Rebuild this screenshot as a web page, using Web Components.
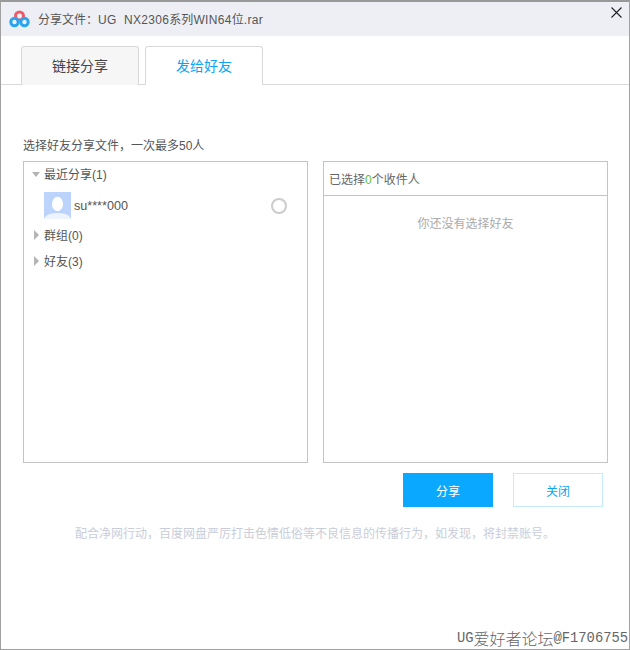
<!DOCTYPE html>
<html lang="zh"><head><meta charset="utf-8"><title>分享文件</title>
<style>
html,body{margin:0;padding:0;background:#fff}
body{font:12px "Liberation Sans","Noto Sans CJK SC",sans-serif;color:#333}
</style></head><body>
<share-dialog>
  <title-bar slot="title" pre="分享文件：" a="UG  NX2306" b="系列" c="WIN64" d="位" e=".rar"></title-bar>
  <share-tabs slot="tabs">
    <share-tab>链接分享</share-tab>
    <share-tab active>发给好友</share-tab>
  </share-tabs>
  <span slot="hint">选择好友分享文件，一次最多50人</span>
  <friend-panel slot="left">
    <tree-row open>最近分享(1)</tree-row>
    <friend-row>su****000</friend-row>
    <tree-row>群组(0)</tree-row>
    <tree-row>好友(3)</tree-row>
  </friend-panel>
  <selected-panel slot="right"></selected-panel>
  <action-button slot="actions" primary>分享</action-button>
  <action-button slot="actions">关闭</action-button>
  <span slot="notice">配合净网行动，百度网盘严厉打击色情低俗等不良信息的传播行为，如发现，将封禁账号。</span>
  <water-mark slot="mark"></water-mark>
</share-dialog>
<script>
function def(name, css, html){
  customElements.define(name, class extends HTMLElement{
    connectedCallback(){
      if(this.shadowRoot) return;
      const r=this.attachShadow({mode:'open'});
      r.innerHTML='<style>'+css+'</style>'+(typeof html==='function'?html(this):html);
    }
  });
}
def('share-dialog',`
:host{display:flex;flex-direction:column;position:relative;box-sizing:border-box;width:630px;height:650px;
 border:1px solid #a0a0a0;border-top:2px solid #999;background:#fff;overflow:hidden}
.hint{margin:53px 0 7px 22px;line-height:16px;font-size:12px;color:#555}
.panels{display:flex;gap:15px;margin-left:22px}
.actions{display:flex;justify-content:flex-end;gap:20px;margin:10px 26px 0 0}
.notice{margin-top:19px;text-align:center;line-height:16px;font-size:12px;color:#c9cdd8}
`,`<slot name="title"></slot><slot name="tabs"></slot>
<div class="hint"><slot name="hint"></slot></div>
<div class="panels"><slot name="left"></slot><slot name="right"></slot></div>
<div class="actions"><slot name="actions"></slot></div>
<div class="notice"><slot name="notice"></slot></div>
<slot name="mark"></slot>`);
def('title-bar',`
:host{display:flex;align-items:center;height:34px;background:#eeeff4;flex:none}
svg{display:block}
.logo{margin-left:8px;width:21px;height:18px;flex:none}
.t{margin-left:8px;font-size:12px;color:#555;flex:1;white-space:pre;position:relative;top:-1px}
.l{letter-spacing:.33px}
.x{margin-right:7px;width:11px;height:11px;align-self:flex-start;margin-top:5px;flex:none}
`,el=>{const g=n=>el.getAttribute(n);return `<svg class="logo" viewBox="0 0 21 18">
<circle cx="10.5" cy="6" r="4" fill="none" stroke="#ef5b6a" stroke-width="3"/>
<circle cx="5.5" cy="12" r="3.7" fill="none" stroke="#2ba4f0" stroke-width="3"/>
<circle cx="15.5" cy="12" r="3.7" fill="none" stroke="#2ba4f0" stroke-width="3"/>
</svg><span class="t">${g('pre')}<span class="l">${g('a')}</span>${g('b')}<span class="l">${g('c')}</span>${g('d')}<span class="l">${g('e')}</span></span>
<svg class="x" viewBox="0 0 11 11"><path d="M.5.5l10 10M10.5.5l-10 10" stroke="#222" stroke-width="1.1" fill="none"/></svg>`});
def('share-tabs',`
:host{display:flex;gap:6px;box-sizing:border-box;height:49px;padding:10px 0 0 20px;border-bottom:1px solid #d9d9d9;flex:none}
`,`<slot></slot>`);
def('share-tab',`
:host{display:flex;align-items:center;justify-content:center;box-sizing:border-box;width:118px;height:39px;
 border:1px solid #d9d9d9;border-bottom:0;border-radius:3px 3px 0 0;background:#f6f6f6;font-size:14px;color:#444;padding-bottom:3px}
:host([active]){background:#fff;color:#0aa5f5;position:relative;z-index:1}
:host([active])::after{content:"";position:absolute;left:0;right:0;bottom:-1px;height:1px;background:#fff}
`,`<slot></slot>`);
def('friend-panel',`
:host{display:block;box-sizing:border-box;width:285px;height:302px;border:1px solid #c4c4c4}
`,`<slot></slot>`);
def('tree-row',`
:host{display:flex;align-items:center;box-sizing:border-box;height:26px;font-size:12px;color:#555;position:relative;padding:0 0 2px 20px}
:host([open]){height:24px}
i{position:absolute;left:10px;top:8px;width:0;height:0;border-style:solid;border-width:5px 0 5px 5px;border-color:transparent transparent transparent #b4b4b4}
:host([open]) i{left:8px;top:10px;border-width:5px 4.5px 0 4.5px;border-color:#b4b4b4 transparent transparent transparent}
`,`<i></i><slot></slot>`);
def('friend-row',`
:host{display:flex;align-items:center;height:27px;padding:6px 20px 3px 20px;font-size:12px;color:#555}
svg{display:block;flex:none}
.n{margin-left:3px;flex:1;font-size:12.6px}
.r{box-sizing:border-box;width:16px;height:16px;border:2px solid #ccc;border-radius:50%;flex:none}
`,`<svg width="27" height="27" viewBox="0 0 27 27"><rect width="27" height="27" fill="#bcd3fb"/>
<ellipse cx="13.5" cy="12" rx="5.6" ry="7.2" fill="#fff"/>
<path d="M0 27c1-4 7-6 13.5-6S26 23 27 27z" fill="#eef4fe"/></svg>
<span class="n"><slot></slot></span><span class="r"></span>`);
def('selected-panel',`
:host{display:block;box-sizing:border-box;width:285px;height:302px;border:1px solid #c4c4c4}
.h{display:flex;align-items:center;box-sizing:border-box;height:34px;padding-left:5px;border-bottom:1px solid #c4c4c4;font-size:12px;color:#666}
b{font-weight:400;color:#5fc21e}
.e{margin-top:20px;line-height:16px;text-align:center;font-size:12px;color:#aaa}
`,`<div class="h"><span>已选择<b>0</b>个收件人</span></div><div class="e">你还没有选择好友</div>`);
def('action-button',`
:host{display:flex;align-items:center;justify-content:center;box-sizing:border-box;width:90px;height:34px;
 border:1px solid #c5e9fd;background:#fff;color:#0aa5f5;font-size:12px}
:host([primary]){background:#0aa9ff;border-color:#0aa9ff;color:#fff}
`,`<slot></slot>`);
def('water-mark',`
:host{position:absolute;right:1px;bottom:2px;height:18px;display:flex;align-items:center;color:#666;
 font:13.8px "Liberation Mono",monospace;white-space:pre}
span{font:16px "Noto Sans CJK SC",sans-serif;font-weight:300}
`,`UG<span>爱好者论坛</span>@F1706755`);
</script>
</body></html>
